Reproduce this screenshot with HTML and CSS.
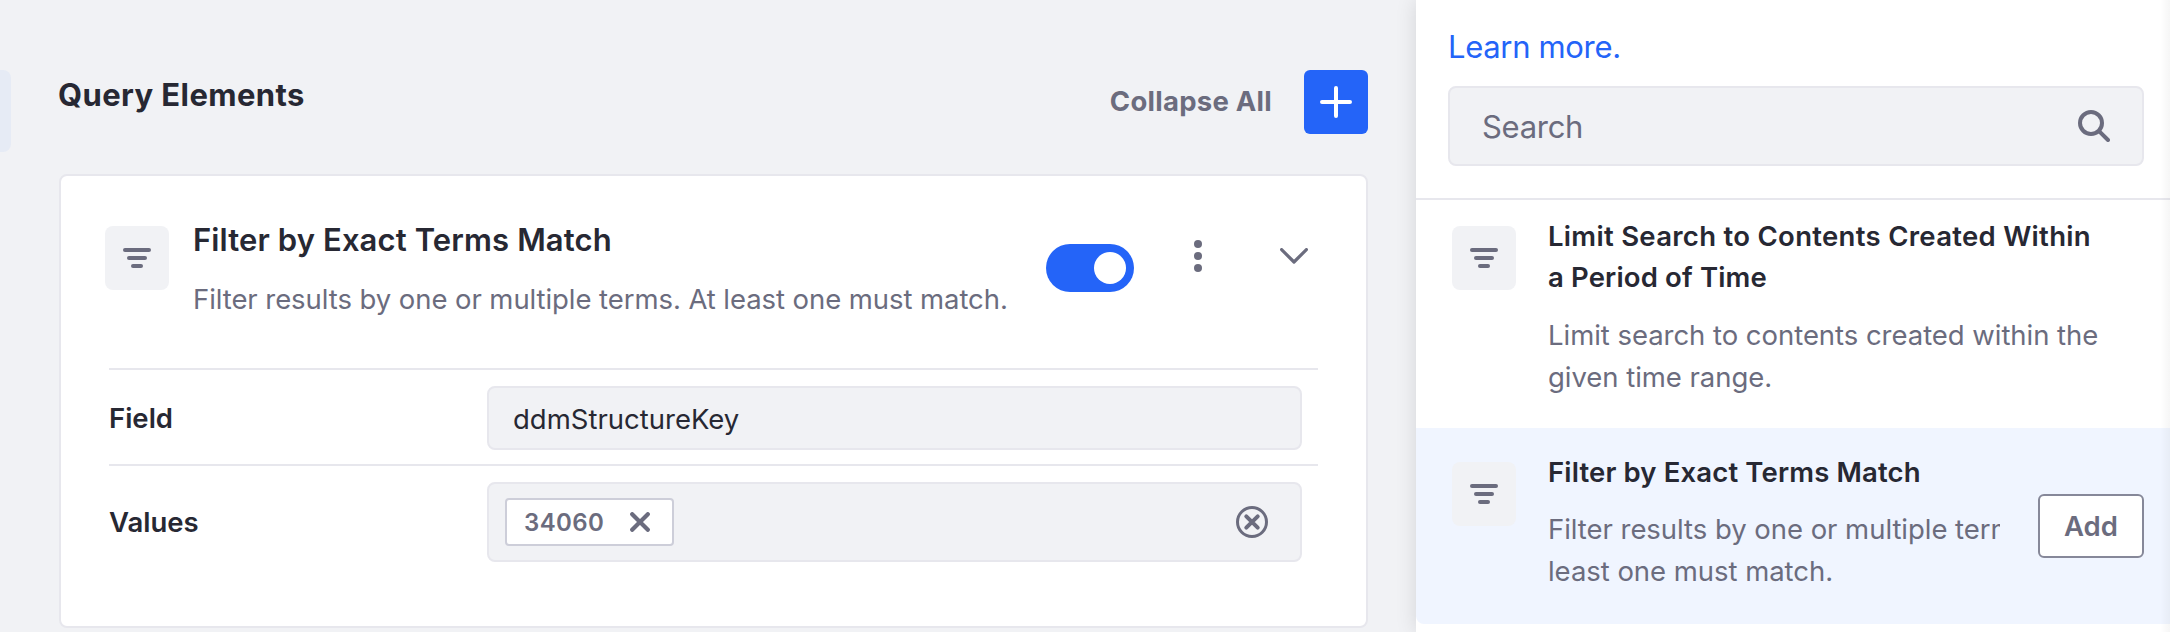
FILE: index.html
```
<!DOCTYPE html>
<html lang="en">
<head>
<meta charset="utf-8">
<title>Query Elements</title>
<link rel="stylesheet" href="styles.css">
</head>
<body>
<svg class="sprite" aria-hidden="true">
  <symbol id="filter" viewBox="0 0 28 20">
    <rect x="0" y="0" width="28" height="4" rx="2"/>
    <rect x="4" y="8" width="20" height="4" rx="2"/>
    <rect x="8" y="16" width="12" height="4" rx="2"/>
  </symbol>
</svg>
<div class="app">
  <main class="builder">
    <div class="nav-stub"></div>
    <div class="content">
      <header class="toolbar">
        <h1 class="heading">Query Elements</h1>
        <button class="collapse">Collapse All</button>
        <button class="add-button" aria-label="Add element">
          <svg width="32" height="32" viewBox="0 0 32 32"><path d="M16 2v28M2 16h28" stroke="#fff" stroke-width="4" stroke-linecap="round"/></svg>
        </button>
      </header>
      <section class="card">
        <div class="card-head">
          <span class="tile"><svg width="28" height="20"><use href="#filter"/></svg></span>
          <div class="card-text">
            <h2 class="card-title">Filter by Exact Terms Match</h2>
            <p class="card-desc">Filter results by one or multiple terms. At least one must match.</p>
          </div>
          <span class="toggle"><span class="knob"></span></span>
          <svg class="dots" width="8" height="32" viewBox="0 0 8 32"><circle cx="4" cy="4" r="4"/><circle cx="4" cy="16" r="4"/><circle cx="4" cy="28" r="4"/></svg>
          <svg class="chevron" width="28" height="16" viewBox="0 0 28 16"><path d="M1.6 1.6 14 14 26.4 1.6"/></svg>
        </div>
        <div class="row">
          <label class="label">Field</label>
          <div class="input">ddmStructureKey</div>
        </div>
        <div class="row">
          <label class="label">Values</label>
          <div class="input multi">
            <span class="tag">34060
              <svg width="20" height="20" viewBox="0 0 20 20"><path d="M2.2 2.2 17.8 17.8M17.8 2.2 2.2 17.8" stroke="#6b6c7e" stroke-width="4.2" stroke-linecap="round"/></svg>
            </span>
            <svg class="clear" width="32" height="32" viewBox="0 0 32 32" fill="none" stroke="#6b6c7e" stroke-linecap="round"><circle cx="16" cy="16" r="14.5" stroke-width="3"/><path d="M10.3 10.3 21.7 21.7M21.7 10.3 10.3 21.7" stroke-width="4"/></svg>
          </div>
        </div>
      </section>
    </div>
  </main>
  <aside class="sidebar">
    <div class="side-head">
      <a class="learn">Learn more.</a>
      <div class="search">
        <span>Search</span>
        <svg width="32" height="32" viewBox="0 0 32 32" fill="none" stroke="#6b6c7e"><circle cx="13" cy="13" r="11" stroke-width="4"/><path d="M21.3 21.3 30 30" stroke-width="4" stroke-linecap="round"/></svg>
      </div>
    </div>
    <div class="item">
      <span class="tile"><svg width="28" height="20"><use href="#filter"/></svg></span>
      <div class="item-text">
        <h3 class="item-title"><span class="wide">Limit Search to Contents Created Within</span><br>a Period of Time</h3>
        <p class="item-desc">Limit search to contents created within the<br>given time range.</p>
      </div>
    </div>
    <div class="item active">
      <span class="tile"><svg width="28" height="20"><use href="#filter"/></svg></span>
      <div class="item-text">
        <h3 class="item-title">Filter by Exact Terms Match</h3>
        <p class="item-desc">Filter results by one or multiple terms. At<br>least one must match.</p>
      </div>
      <button class="add">Add</button>
    </div>
    <div class="edge-shadow"></div>
  </aside>
</div>
</body>
</html>
```
FILE: styles.css
```
* { box-sizing: border-box; }
body { margin: 0; font-family: Inter, "Liberation Sans", sans-serif; color: #272833; background: #f1f2f5; overflow: hidden; }
h1, h2, h3, p { margin: 0; font-weight: 600; white-space: nowrap; }
p { font-weight: 400; }
button { font: inherit; padding: 0; border: 0; background: none; }
svg { display: block; flex: none; }
.sprite { position: absolute; width: 0; height: 0; }
.app { display: flex; width: 2170px; height: 632px; overflow: hidden; }

.builder { display: flex; width: 1416px; padding-top: 70px; background: #f1f2f5; }
.nav-stub { width: 11px; height: 82px; margin-right: 48px; background: #e6ebf5; border-radius: 0 8px 8px 0; }
.content { width: 1309px; }
.toolbar { display: flex; height: 64px; }
.heading { flex: 1; margin: 5px 0 0 -1px; font-size: 31px; line-height: 40px; font-weight: 700; letter-spacing: .4px; }
.collapse { height: 62px; margin-right: 32px; font-size: 27.5px; font-weight: 700; letter-spacing: .25px; color: #6b6c7e; }
.add-button { display: grid; place-items: center; width: 64px; height: 64px; border-radius: 6px; background: #2464f8; }

.card { height: 454px; margin-top: 40px; padding: 0 48px; background: #fff; border: 2px solid #e7e7ed; border-radius: 8px; }
.card-head { display: flex; height: 192px; margin-left: -4px; padding-top: 50px; }
.tile { display: flex; justify-content: center; flex: none; width: 64px; height: 64px; padding-top: 22px; border-radius: 8px; background: #f1f2f5; fill: #6b6c7e; }
.card-text { width: 853px; margin-left: 24px; }
.card-title { margin: -6px 0 0; font-size: 31px; line-height: 40px; letter-spacing: .12px; }
.card-desc { margin: 19px 0 0; font-size: 27.5px; line-height: 40px; letter-spacing: -.07px; color: #6b6c7e; }
.toggle { flex: none; width: 88px; height: 48px; margin-top: 18px; padding: 8px 8px 8px 48px; border-radius: 24px; background: #2464f8; }
.knob { display: block; width: 32px; height: 32px; border-radius: 50%; background: #fff; }
.dots { margin: 14px 0 0 60px; fill: #6b6c7e; }
.chevron { margin: 22px 0 0 78px; fill: none; stroke: #6b6c7e; stroke-width: 3.2; stroke-linecap: round; stroke-linejoin: round; }

.row { display: flex; align-items: flex-start; height: 96px; padding-top: 16px; border-top: 2px solid #e7e7ed; }
.row + .row { height: 116px; }
.label { width: 378px; font-size: 27.5px; line-height: 64px; font-weight: 600; }
.row + .row .label { line-height: 80px; }
.input { display: flex; align-items: center; width: 815px; height: 64px; padding: 2px 0 0 24px; background: #f1f2f5; border: 2px solid #e7e7ed; border-radius: 8px; font-size: 27.5px; }
.multi { justify-content: space-between; height: 80px; padding: 0 32px 0 16px; }
.tag { display: flex; align-items: center; justify-content: space-between; width: 169px; height: 48px; padding: 0 22px 0 17px; background: #fff; border: 2px solid #cdced9; border-radius: 4px; font-size: 24px; font-weight: 600; letter-spacing: .4px; color: #6b6c7e; }

.sidebar { position: relative; width: 754px; background: #fff; box-shadow: 0 0 20px rgba(0,0,0,.12); }
.side-head { height: 200px; padding: 27px 26px 0 32px; border-bottom: 2px solid #e7e7ed; }
.learn { display: block; height: 59px; font-size: 31px; line-height: 40px; letter-spacing: -.33px; color: #2464f8; }
.search { display: flex; align-items: center; justify-content: space-between; height: 80px; padding: 0 32px; background: #f1f2f5; border: 2px solid #e7e7ed; border-radius: 8px; font-size: 31px; letter-spacing: -.3px; color: #6b6c7e; }
.item { display: flex; height: 228px; padding: 26px 0 0 36px; }
.item-text { margin-left: 32px; }
.item-title { margin-top: -10px; font-size: 27.5px; line-height: 41px; letter-spacing: .15px; }
.wide { letter-spacing: .3px; }
.item-desc { margin-top: 16px; font-size: 27.5px; line-height: 42px; letter-spacing: -.04px; color: #6b6c7e; }
.active { height: 196px; padding-top: 34px; background: #f0f5ff; border-radius: 0 0 0 8px; }
.active .item-text { width: 452px; overflow: hidden; margin-top: -10px; }
.active .item-title { margin-top: 0; }
.active .item-desc { margin-top: 15px; }
.add { width: 106px; height: 64px; margin: 32px 0 0 38px; background: #fff; border: 2px solid #868899; border-radius: 6px; font-size: 27.5px; font-weight: 600; color: #6b6c7e; }
.edge-shadow { position: absolute; top: 0; right: 0; width: 10px; height: 632px; background: linear-gradient(to right, rgba(0,0,0,0), rgba(0,0,0,.035)); }
```
